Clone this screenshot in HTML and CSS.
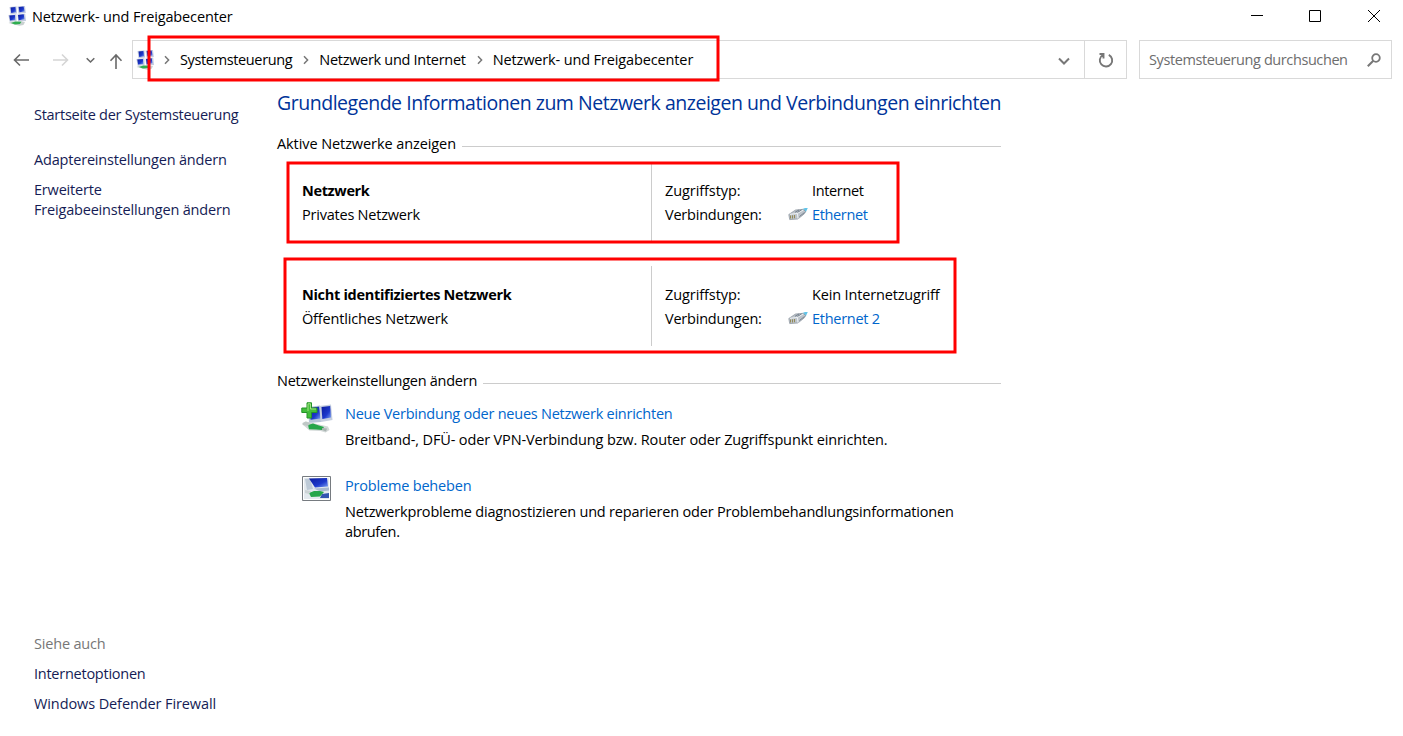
FILE: index.html
```html
<!DOCTYPE html>
<html lang="de">
<head>
<meta charset="utf-8">
<title>Netzwerk- und Freigabecenter</title>
<link rel="stylesheet" href="styles.css">
</head>
<body>
<svg class="defs" width="0" height="0">
  <defs>
    <linearGradient id="screen" x1="0" y1="0" x2="1" y2="1"><stop offset="0" stop-color="#0c1c9c"/><stop offset=".6" stop-color="#1d39cc"/><stop offset="1" stop-color="#7ea2f2"/></linearGradient>
    <symbol id="network" viewBox="0 0 18 20">
      <path d="M1.500 1l7-.7.600 7.200-6.600.8zM9.500.5l7.500-.5.800 7-7.300.8zM.4 9l8-.8.2 7-7 .6zM9.500 8.500l7.700-.8.800 7.200-7.800.8z" fill="#c3cbe0"/>
      <g fill="url(#screen)">
        <path d="M2.600 1.600l4.800-.6.700 5.200-4.900.8z"/><path d="M10.700 1l4.900-.5 1 5-5.200.8z"/>
        <path d="M1.300 9.500l5.600-.6.400 5-5.200.7z"/><path d="M10 8.900l5.700-.6.800 5-5.800.9z"/>
      </g>
      <path d="M.5 17l2.700-1.300 10.800-.2 3 .8-1.600 2.700-4 .8z" fill="#c9d1d0"/>
      <path d="M3 17l4.200-1.600 6.300.4-1.600 2.300-5 .3z" fill="#2fae50"/>
    </symbol>
    <symbol id="plug" viewBox="0 0 20 14">
      <path d="M12 3l5-2 2.800-.1-1.900 4.200-3.500 2z" fill="#62c4e8"/>
      <path d="M.8 7.500L7.500 3l7.800-.7 2.300 2.300-1.200 2.200-6.500 5.200-8.200.6z" fill="#bcc3ca" stroke="#8a929c" stroke-width=".7"/>
      <path d="M2 7.300l7.300-.8 6-3.600M9.500 6.500l.5 5.200" fill="none" stroke="#f1f4f6" stroke-width="1"/>
      <path d="M7 5.300l4-2.300M9.500 5.300L13.500 3M11.500 9.500l5-4" stroke="#65717f" stroke-width=".8"/>
      <path d="M2.500 8.500v3M4.500 8.300v3.200M6.500 8v3.200" stroke="#938a58" stroke-width="1"/>
    </symbol>
    <symbol id="crumb" viewBox="0 0 6 10"><path d="M1 1.200L4.600 5 1 8.800" fill="none" stroke="#777" stroke-width="1.500"/></symbol>
  </defs>
</svg>
<div class="window">
  <header class="titlebar">
    <svg class="app-icon"><use href="#network"/></svg>
    <span class="t title">Netzwerk- und Freigabecenter</span>
    <svg class="controls" viewBox="0 0 132 16" fill="none" stroke="#000"><path d="M1 7.500h12M59.500 2.500h11v11h-11zM118 2l12 12M130 2l-12 12"/></svg>
  </header>
  <nav class="toolbar">
    <svg class="nav-icons" viewBox="0 0 132 38" fill="none" stroke="#696969" stroke-width="1.600">
      <path d="M29 20h-14M20 14.500l-5.500 5.500 5.500 5.500"/>
      <path d="M53 20h14M62 14.500l5.500 5.500-5.500 5.500" stroke="#d5d5d5"/>
      <path d="M86.700 18.300l3.800 3.700 3.800-3.700"/>
      <path d="M116 29V15M110.500 20.700l5.500-5.700 5.500 5.700"/>
    </svg>
    <div class="address">
      <svg class="address-icon"><use href="#network"/></svg>
      <svg class="crumb"><use href="#crumb"/></svg>
      <span class="t crumb-system">Systemsteuerung</span>
      <svg class="crumb"><use href="#crumb"/></svg>
      <span class="t crumb-internet">Netzwerk und Internet</span>
      <svg class="crumb"><use href="#crumb"/></svg>
      <span class="t title">Netzwerk- und Freigabecenter</span>
      <svg class="drop" viewBox="0 0 14 10" fill="none" stroke="#777" stroke-width="2"><path d="M2 2.500l5 5 5-5"/></svg>
      <div class="refresh"><svg viewBox="0 0 16 16" width="16" height="16" fill="none" stroke="#777" stroke-width="1.900"><path d="M4.800 3A6.200 6.200 0 1 0 10.800 2.800M1.500 2H5.500v4.500"/></svg></div>
    </div>
    <div class="search">
      <span class="t search-text">Systemsteuerung durchsuchen</span>
      <svg viewBox="0 0 14 14" width="14" height="14" fill="none" stroke="#777" stroke-width="1.800"><circle cx="9" cy="5" r="3.800"/><path d="M6.300 7.700L.8 13.200" stroke-width="2"/></svg>
    </div>
  </nav>
  <div class="body">
    <aside class="sidebar">
      <a class="home"><span class="t home-label">Startseite der Systemsteuerung</span></a>
      <a><span class="t side-label">Adaptereinstellungen ändern</span></a>
      <a><span class="t side-label">Erweiterte</span><br><span class="t side-label">Freigabeeinstellungen ändern</span></a>
      <div class="see-also">
        <p><span class="t side-label">Siehe auch</span></p>
        <a><span class="t options-label">Internetoptionen</span></a>
        <a><span class="t firewall-label">Windows Defender Firewall</span></a>
      </div>
    </aside>
    <main class="content">
      <h1><span class="t heading">Grundlegende Informationen zum Netzwerk anzeigen und Verbindungen einrichten</span></h1>
      <div class="section-title"><span class="t active-title">Aktive Netzwerke anzeigen</span></div>
      <section class="network">
        <div class="name"><b class="t net-name">Netzwerk</b><span class="t net-kind">Privates Netzwerk</span></div>
        <div class="details">
          <span class="t access">Zugriffstyp:</span><i></i><span class="t short-value">Internet</span>
          <span class="t links">Verbindungen:</span><svg class="plug"><use href="#plug"/></svg><a class="t short-value">Ethernet</a>
        </div>
      </section>
      <section class="network">
        <div class="name"><b class="t unknown-name">Nicht identifiziertes Netzwerk</b><span class="t unknown-kind">Öffentliches Netzwerk</span></div>
        <div class="details">
          <span class="t access">Zugriffstyp:</span><i></i><span class="t unknown-kind">Kein Internetzugriff</span>
          <span class="t links">Verbindungen:</span><svg class="plug"><use href="#plug"/></svg><a class="t ethernet-two">Ethernet 2</a>
        </div>
      </section>
      <div class="section-title"><span class="t change-title">Netzwerkeinstellungen ändern</span></div>
      <section class="task">
        <svg class="task-icon" viewBox="0 0 32 32">
          <path d="M7 5l12-1.500 1 16.500-12 1z" fill="#b5c4d8"/><path d="M9 6l10-1.500.6 12-10 1.300z" fill="url(#screen)"/>
          <path d="M18 4l12-1.500 1.500 15.500-11.500 2z" fill="#c6cfdf"/><path d="M20.500 5l8.700-1 .8 11.500-8.700 1.500z" fill="url(#screen)"/>
          <path d="M1 22l4-2.500 22 5 1.500 3.500-4 2.500-5-1.500-11-.5z" fill="#d2d8d7"/><path d="M7 23l5-1.500 6 2 5 1.500-2 3-6-.6-7-.2z" fill="#25a64a"/><path d="M1.500 21l3-1.600 4.500 1.600-2 3-5-1z" fill="#bfc8c6"/><path d="M21 26l5 .6-1 2.800-4-1.400z" fill="#a9b3b1"/>
          <path d="M6 .8h4.500V6H16v4.500h-5.500V16H6v-5.500H.8V6H6z" fill="#43bd3b" stroke="#249329"/><path d="M7 9V1.800h2.500V7H15" fill="none" stroke="#a2e184"/>
        </svg>
        <div><a><span class="t setup-link">Neue Verbindung oder neues Netzwerk einrichten</span></a>
        <p><span class="t setup-text">Breitband-, DFÜ- oder VPN-Verbindung bzw. Router oder Zugriffspunkt einrichten.</span></p></div>
      </section>
      <section class="task">
        <svg class="task-icon" viewBox="0 0 32 32">
          <path d="M1.500 4.500h28v24h-28z" fill="#e3e9ee" stroke="#767b80"/><path d="M2.500 5.500h26v22h-26z" fill="none" stroke="#fff"/>
          <path d="M4 7l5-.5 3 10.500-6 1z" fill="#bdcad7"/><path d="M8 6.500l18-.5 1 8.500-13 1z" fill="url(#screen)"/><path d="M13 16.500l15-1 .2 3-9 1z" fill="#a9bad0"/><path d="M21 22l7-1v5h-9z" fill="#3355b0"/>
          <path d="M8 21l5-2 6 0 4 1-4 4.500-9 .5z" fill="#25a64a"/><path d="M4 18l6 1-2 3-4-1z" fill="#ccd3d5"/>
        </svg>
        <div><a><span class="t side-label">Probleme beheben</span></a>
        <p><span class="t side-label">Netzwerkprobleme diagnostizieren und reparieren oder Problembehandlungsinformationen</span><br><span class="t short-value">abrufen.</span></p></div>
      </section>
    </main>
  </div>
  <svg class="marks" viewBox="0 0 1403 736" fill="none" stroke="#f00" stroke-width="3"><rect x="149" y="37" width="569" height="43"/><rect x="288" y="163" width="610" height="79"/><rect x="285" y="259" width="670" height="93"/></svg>
</div>
</body>
</html>
```
FILE: styles.css
```css
* { box-sizing: border-box; }
body { margin: 0; background: #fff; color: #000; font: 14.5px/20px "Open Sans", "Noto Sans", sans-serif; }
h1, p { margin: 0; font-weight: 400; }
a { display: block; }
.defs { position: absolute; }
.window { position: relative; width: 1403px; height: 736px; overflow: hidden; }

/* text tracking */
.t { white-space: nowrap; }
.title { letter-spacing: -.13px; }
.crumb-system { letter-spacing: -.36px; }
.crumb-internet { letter-spacing: -.295px; }
.search-text { letter-spacing: -.41px; }
.home-label { letter-spacing: -.27px; }
.side-label { letter-spacing: -.187px; }
.options-label { letter-spacing: -.25px; }
.firewall-label { letter-spacing: -.1px; }
.heading { letter-spacing: -.47px; }
.active-title { letter-spacing: -.085px; }
.change-title { letter-spacing: -.265px; }
.net-name { letter-spacing: -.35px; }
.net-kind { letter-spacing: -.22px; }
.access { letter-spacing: -.08px; }
.links { letter-spacing: -.22px; }
.short-value { letter-spacing: -.36px; }
.unknown-name { letter-spacing: -.3px; }
.unknown-kind { letter-spacing: -.155px; }
.ethernet-two { letter-spacing: -.28px; }
.setup-link { letter-spacing: -.24px; }
.setup-text { letter-spacing: -.135px; }

/* title bar and toolbar */
.titlebar { display: flex; height: 40px; padding: 6px 21px 0 8px; align-items: flex-start; }
.titlebar .title { margin-top: 1px; }
.app-icon { width: 18px; height: 20px; margin-right: 6px; }
.controls { width: 132px; height: 16px; margin: 2px 0 0 auto; }
.toolbar { display: flex; height: 39px; }
.nav-icons { width: 132px; height: 38px; }
.address { display: flex; align-items: center; width: 995px; height: 39px; border: 1px solid #d9d9d9; }
.address-icon { width: 18px; height: 20px; margin: 0 10px 0 3px; }
.crumb { width: 6px; height: 10px; margin-right: 10px; }
.t + .crumb { margin-left: 11px; }
.drop { width: 14px; height: 10px; margin: 2px 13px 0 auto; }
.refresh { width: 42px; height: 37px; border-left: 1px solid #d9d9d9; display: grid; place-items: center; }
.search { display: flex; align-items: center; justify-content: space-between; width: 253px; margin-left: 12px; border: 1px solid #d9d9d9; padding: 0 10px 0 9px; color: #6d6d6d; }

/* sidebar */
.body { display: flex; height: 657px; }
.sidebar { display: flex; flex-direction: column; gap: 10px; width: 277px; padding: 26px 0 22px 34px; color: #151c55; }
.home { margin-bottom: 15px; }
.see-also { display: grid; gap: 10px; margin-top: auto; }
.see-also p { color: #777; }

/* main column */
.content { width: 724px; padding-top: 10px; }
.content a { color: #0066cc; }
h1 { height: 28px; line-height: 28px; font-size: 19.5px; color: #003399; }
.section-title { display: flex; align-items: center; gap: 6px; margin-top: 17px; }
.section-title::after { content: ""; flex: 1; height: 1px; margin-top: 5px; background: #ccc; }
.network { display: flex; height: 80px; margin-top: 8px; padding-left: 25px; line-height: 24px; }
.network + .network { margin-top: 24px; }
.network + .section-title { margin-top: 25px; }
.name { display: flex; flex-direction: column; align-items: flex-start; width: 350px; padding-top: 17px; border-right: 1px solid #ccc; }
.details { display: grid; grid-template-columns: 123px 24px auto; grid-template-rows: 24px 24px; padding: 17px 0 0 13px; justify-items: start; }
.plug { width: 20px; height: 14px; margin-top: 4px; }
.task { display: grid; grid-template-columns: 44px auto; padding-left: 24px; margin-top: 13px; }
.task + .task { margin-top: 26px; }
.task-icon { width: 32px; height: 32px; margin-top: -2px; }
.task + .task .task-icon { margin-top: -4px; }
.task p { margin-top: 6px; }

/* highlight frames drawn over the window */
.marks { position: absolute; inset: 0; width: 1403px; height: 736px; pointer-events: none; }
```
